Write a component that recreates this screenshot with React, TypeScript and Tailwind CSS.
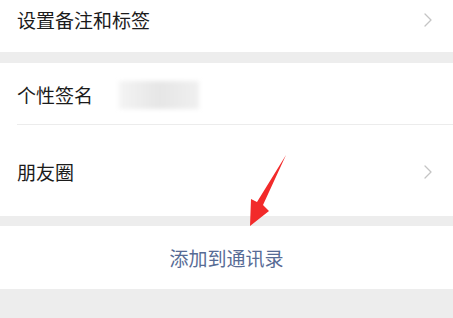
import { ChevronRight } from 'lucide-react';

export default function App() {
    return (
        <div className="relative w-[453px] h-[318px] bg-[#ededed] overflow-hidden" style={{ fontFamily: '"Noto Sans CJK SC", "Noto Sans", sans-serif' }}>
            <div className="bg-white h-[52px] pl-[17px] pr-[13px] pt-[6px] flex items-start">
                <span className="text-[19px] leading-[28px] text-[#1b1b1b]">设置备注和标签</span>
                <div className="flex-1" />
                <ChevronRight className="text-[#c4c4c4] mt-[2px]" size={24} strokeWidth={1.3} />
            </div>

            <div className="mt-[11px] bg-white pl-[17px]">
                <div className="h-[62px] flex items-center border-b border-[#ececec] pt-[3px]">
                    <span className="text-[19px] leading-[28px] text-[#1b1b1b]">个性签名</span>
                    <div className="ml-[26px] w-[80px] h-[28px] bg-gradient-to-r from-[#f4f4f4] via-[#e6e6e6] to-[#f0f0f0] blur-[2px]" />
                </div>
                <div className="h-[91px] flex items-center pr-[13px] pt-[3px]">
                    <span className="text-[19px] leading-[28px] text-[#1b1b1b]">朋友圈</span>
                    <div className="flex-1" />
                    <ChevronRight className="text-[#c4c4c4]" size={24} strokeWidth={1.3} />
                </div>
            </div>

            <div className="mt-[10px] bg-white h-[63px] flex items-center justify-center">
                <span className="text-[19px] leading-[28px] text-[#576b95]">添加到通讯录</span>
            </div>

            <svg className="absolute left-0 top-0 pointer-events-none" width="453" height="318" viewBox="0 0 453 318">
                <polygon points="286,155 263,205 269,211 250,226 251,199 257,202" fill="#f22a2a" />
            </svg>
        </div>
    );
}
